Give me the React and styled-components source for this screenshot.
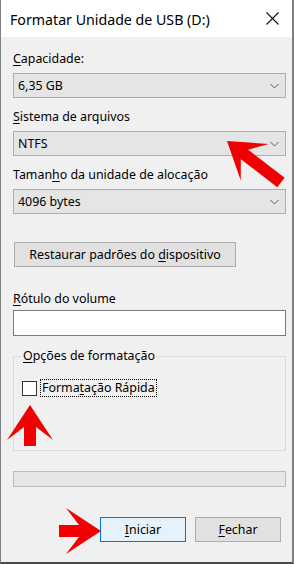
import styled, { createGlobalStyle } from 'styled-components';

const GlobalStyle = createGlobalStyle`
    html, body {
        margin: 0;
        padding: 0;
        background: #f0f0f0;
    }
    * {
        box-sizing: border-box;
    }
`

const Window = styled.div`
    position: relative;
    width: 294px;
    height: 564px;
    display: flex;
    flex-direction: column;
    background: #f0f0f0;
    border-left: 1px solid #7f7f7f;
    border-right: 2px solid #7f7f7f;
    border-bottom: 2px solid #4a4a4a;
    font-family: "Noto Sans", "Open Sans", sans-serif;
    font-size: 12.4px;
    color: #000;
    overflow: hidden;
`

const TitleBar = styled.div`
    height: 37px;
    flex-shrink: 0;
    background: #fff;
    display: flex;
    align-items: center;
    justify-content: space-between;
    padding: 0 13px 0 9px;
`

const Title = styled.div`
    font-size: 14.2px;
    line-height: 20px;
    margin-top: 3px;
`

const Body = styled.div`
    flex: 1;
    display: flex;
    flex-direction: column;
    padding: 14px 6px 0 12px;
`

const Field = styled.div`
    display: flex;
    flex-direction: column;
    gap: ${props => props.$gap || 6}px;
    margin-top: ${props => props.$top || 0}px;
`

const Label = styled.div`
    line-height: 16px;
    height: 16px;
    white-space: nowrap;
`

const U = styled.span`
    text-decoration: underline;
    text-underline-offset: 2px;
`

const Combo = styled.div`
    height: 25px;
    background: #e5e5e5;
    border: 1px solid #adadad;
    display: flex;
    align-items: center;
    justify-content: space-between;
    padding: 0 6px 0 4px;
`

const ComboText = styled.span`
    line-height: 16px;
`

const TextBox = styled.div`
    height: 26px;
    background: #fff;
    border: 1px solid #7a7a7a;
`

const Button = styled.div`
    width: ${props => props.$width}px;
    height: 25px;
    display: flex;
    align-items: center;
    justify-content: center;
    background: ${props => props.$primary ? '#e5f1fb' : '#e1e1e1'};
    border: 1px solid ${props => props.$primary ? '#0078d7' : '#adadad'};
    line-height: 16px;
`

const RestoreRow = styled.div`
    display: flex;
    margin-top: 28px;
    padding-left: 1px;
`

const Group = styled.fieldset`
    margin: 12px 0 0 0;
    padding: 15px 8px 0 8px;
    height: 103px;
    border: 1px solid #dcdcdc;
    min-width: 0;
`

const Legend = styled.legend`
    padding: 0 1px;
    margin-left: 0;
    line-height: 16px;
`

const CheckRow = styled.div`
    display: flex;
    align-items: center;
    gap: 3px;
`

const CheckBox = styled.div`
    width: 15px;
    height: 15px;
    background: #fff;
    border: 1px solid #333;
`

const FocusLabel = styled.span`
    border: 1px dotted #000;
    padding: 0 1px;
    line-height: 16px;
`

const Progress = styled.div`
    height: 16px;
    margin-top: 20px;
    background: #e6e6e6;
    border: 1px solid #bcbcbc;
`

const Footer = styled.div`
    display: flex;
    justify-content: flex-end;
    gap: 9px;
    margin-top: 30px;
    padding-right: 5px;
`

const ArrowSvg = styled.svg`
    position: absolute;
    left: ${props => props.$x - props.$r}px;
    top: ${props => props.$y - props.$r}px;
    pointer-events: none;
`

function Chevron() {
    return (
        <svg width="9" height="6" viewBox="0 0 9 6">
            <path d="M0.5 1 L4.5 5 L8.5 1" fill="none" stroke="#606060" strokeWidth="1" />
        </svg>
    )
}

function CloseIcon() {
    return (
        <svg width="13" height="13" viewBox="0 0 13 13">
            <path d="M0.5 0.5 L12.5 12.5 M12.5 0.5 L0.5 12.5" stroke="#111" strokeWidth="1.1" />
        </svg>
    )
}

function Arrow({ x, y, angle, length }) {
    const r = length + 6;
    const pts = [
        [-length, -6], [-22, -6], [-35, -23], [0, 0], [-35, 23], [-22, 6], [-length, 6],
    ].map(p => p.join(',')).join(' ');
    return (
        <ArrowSvg $x={x} $y={y} $r={r} width={r * 2} height={r * 2}>
            <g transform={`translate(${r} ${r}) rotate(${angle})`}>
                <polygon points={pts} fill="#f00000" />
            </g>
        </ArrowSvg>
    )
}

export default function App() {
    return (
        <Window>
            <GlobalStyle />
            <TitleBar>
                <Title>Formatar Unidade de USB (D:)</Title>
                <CloseIcon />
            </TitleBar>
            <Body>
                <Field>
                    <Label><U>C</U>apacidade:</Label>
                    <Combo><ComboText>6,35 GB</ComboText><Chevron /></Combo>
                </Field>
                <Field $top={11}>
                    <Label><U>S</U>istema de arquivos</Label>
                    <Combo><ComboText>NTFS</ComboText><Chevron /></Combo>
                </Field>
                <Field $top={11}>
                    <Label>Taman<U>h</U>o da unidade de alocação</Label>
                    <Combo><ComboText>4096 bytes</ComboText><Chevron /></Combo>
                </Field>
                <RestoreRow>
                    <Button $width={222}><span>Restaurar padrões do <U>d</U>ispositivo</span></Button>
                </RestoreRow>
                <Field $top={24} $gap={3}>
                    <Label><U>R</U>ótulo do volume</Label>
                    <TextBox />
                </Field>
                <Group>
                    <Legend><U>O</U>pções de formatação</Legend>
                    <CheckRow>
                        <CheckBox />
                        <FocusLabel>Forma<U>t</U>ação Rápida</FocusLabel>
                    </CheckRow>
                </Group>
                <Progress />
                <Footer>
                    <Button $width={86} $primary><span><U>I</U>niciar</span></Button>
                    <Button $width={86}><span><U>F</U>echar</span></Button>
                </Footer>
            </Body>
            <Arrow x={226} y={141} angle={-142.5} length={68} />
            <Arrow x={28.5} y={405} angle={-90} length={41} />
            <Arrow x={100} y={531} angle={0} length={42} />
        </Window>
    )
}
